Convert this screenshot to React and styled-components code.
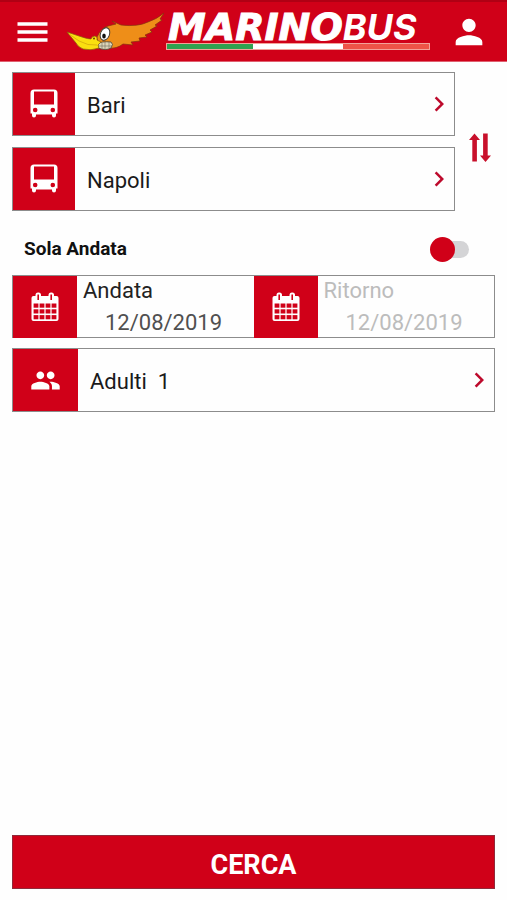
import React, { useState } from "react";
import styled, { createGlobalStyle } from "styled-components";
import { MdPerson, MdPeople, MdChevronRight } from "react-icons/md";

const RED = "#d00018";
const LINE = "#8c8c8c";

const GlobalStyle = createGlobalStyle`
  *, *::before, *::after { box-sizing: border-box; }
  body { margin: 0; background: #fefefe; }
  button, input { font: inherit; color: inherit; margin: 0; }
`;

const Page = styled.div`
  min-height: 100vh;
  display: flex;
  flex-direction: column;
  font-family: Roboto, "Liberation Sans", sans-serif;
  font-size: 22px;
  line-height: 32px;
  color: #1a1a1a;
`;

const Header = styled.header`
  display: flex;
  align-items: center;
  height: 62px;
  padding: 0 18px 0 16px;
  background: ${RED};
  border-top: 2px solid #b00014;
  border-bottom: 1px solid #e06070;
  color: #fff;
`;

const IconButton = styled.button`
  display: flex;
  align-items: center;
  justify-content: center;
  flex: none;
  padding: 0;
  border: 0;
  background: none;
  color: ${(p) => p.$color};
  cursor: pointer;
  svg { display: block; }
`;

const Brand = styled.a`
  flex: 1;
  display: flex;
  align-items: center;
  gap: 2px;
  margin-left: 18px;
  color: #fff;
  text-decoration: none;
  svg { flex: none; display: block; }
`;

const Wordmark = styled.span`
  display: flex;
  flex-direction: column;
  gap: 2px;
`;

const BrandText = styled.span`
  display: flex;
  align-items: baseline;
  height: 28px;
  padding-left: 2px;
  line-height: 28px;
  white-space: nowrap;
`;

const BrandHeavy = styled.span`
  font: italic 700 38px/28px "DejaVu Sans", sans-serif;
  -webkit-text-stroke: 1px #fff;
`;

const BrandLight = styled.span`
  font: italic 700 36px/28px Inter, sans-serif;
`;

const Flag = styled.span`
  width: 264px;
  height: 7px;
  border: 1px solid #f3a29a;
  background: linear-gradient(90deg, #2fa150 33%, #fff 33% 67%, #ee5347 67%);
`;

const Form = styled.form`
  flex: 1;
  display: flex;
  flex-direction: column;
  padding: 10px 12px 11px;
`;

const Route = styled.div`
  display: flex;
  align-items: center;
  gap: 14px;
  padding-right: 4px;
`;

const Stops = styled.div`
  flex: 1;
  display: flex;
  flex-direction: column;
  gap: 11px;
`;

const Picker = styled.button`
  display: flex;
  align-items: stretch;
  width: 100%;
  height: 64px;
  padding: 0;
  border: 1px solid ${LINE};
  background: #fefefe;
  text-align: left;
  cursor: pointer;
`;

const Tile = styled.span`
  flex: none;
  display: flex;
  align-items: center;
  justify-content: center;
  width: ${(p) => p.$width}px;
  background: ${RED};
  color: #fff;
`;

const PickerText = styled.span`
  flex: 1;
  align-self: center;
  padding: 3px 0 0 12px;
  white-space: pre;
`;

const Arrow = styled(MdChevronRight)`
  flex: none;
  align-self: center;
  color: #bd0a2c;
`;

const SwitchRow = styled.label`
  display: flex;
  align-items: center;
  justify-content: space-between;
  height: 64px;
  padding: 12px 26px 0 12px;
  font-size: 19px;
  line-height: 24px;
  font-weight: 700;
  color: #111;
`;

const Switch = styled.input`
  appearance: none;
  display: flex;
  align-items: center;
  width: 39px;
  height: 17px;
  background: #d4d4d6;
  border-radius: 9px;
  cursor: pointer;
  &::before {
    content: "";
    flex: none;
    width: 25px;
    height: 25px;
    border-radius: 50%;
    background: ${RED};
  }
  &:checked { justify-content: flex-end; }
`;

const Dates = styled.div`
  display: grid;
  grid-template-columns: 1fr 1fr;
  height: 63px;
  margin-bottom: 10px;
  border: 1px solid ${LINE};
`;

const DateField = styled.label`
  display: flex;
  min-width: 0;
  color: ${(p) => (p.$off ? "#bcbcbc" : "#222")};
`;

const DateBody = styled.span`
  flex: 1;
  min-width: 0;
  display: flex;
  flex-direction: column;
  padding-left: 6px;
  line-height: 30px;
`;

const DateInput = styled.input`
  width: 100%;
  height: 32px;
  padding: 0 0 0 22px;
  border: 0;
  background: none;
  color: ${(p) => (p.disabled ? "#bcbcbc" : "#505050")};
  outline: none;
`;

const Submit = styled.button`
  height: 54px;
  margin-top: auto;
  padding: 6px 0 0;
  border: 1px solid #8f2a3a;
  background: ${RED};
  color: #fff;
  font-size: 27px;
  font-weight: 700;
  cursor: pointer;
`;

const MenuIcon = () => (
  <svg width="32" height="20" viewBox="0 0 32 20" aria-hidden="true">
    <path d="M1.5 2H31.5M1.5 10H31.5M1.5 18H31.5" stroke="#fff" strokeWidth="3.4" />
  </svg>
);

const BusIcon = () => (
  <svg width="28" height="30" viewBox="0 0 28 30" aria-hidden="true">
    <path
      fill="currentColor"
      fillRule="evenodd"
      d="M4 0.500H24Q27.500 0.500 27.500 4V24.500H26V26.500Q26 28.500 24 28.500T22 26.500V25.500H6V26.500Q6 28.500 4 28.500T2 26.500V24.500H0.500V4Q0.500 0.500 4 0.500ZM4 2.500V15.500H24V2.500ZM5.200 18.700A2.300 2.300 0 1 0 5.200 23.300A2.300 2.300 0 1 0 5.200 18.700ZM22.800 18.700A2.300 2.300 0 1 0 22.800 23.300A2.300 2.300 0 1 0 22.800 18.700Z"
    />
  </svg>
);

const CalendarIcon = () => (
  <svg width="28" height="30" viewBox="0 0 28 30" aria-hidden="true">
    <rect x="0.500" y="4" width="27" height="25" rx="2" fill="#fff" />
    <rect x="4.500" y="0.500" width="5.500" height="9" rx="2.500" fill="#fff" />
    <rect x="17.500" y="0.500" width="5.500" height="9" rx="2.500" fill="#fff" />
    <path d="M7.200 2.500V8M20.200 2.500V8" stroke={RED} strokeWidth="1.600" />
    {[11.5, 17.3, 23.1].map((y) =>
      [2.6, 8.6, 14.6, 20.6].map((x) => (
        <rect key={`${x}-${y}`} x={x} y={y} width="4.800" height="4.200" fill={RED} />
      ))
    )}
  </svg>
);

const SwapIcon = () => (
  <svg width="22" height="42" viewBox="0 -12 22 42" aria-hidden="true">
    <path
      fill="#c8102b"
      d="M3.300 28.500V7H0L5.500 0.500L11 7H7.900V28.500ZM14.100 0.500V22.500H11L16.500 29L22 22.500H18.700V0.500Z"
    />
  </svg>
);

const BirdIcon = () => (
  <svg width="98" height="42" viewBox="66 11 98 42" aria-hidden="true">
    <path
      d="M97 37Q101 28 108 26L116 24L112 21L121 25Q138 27 148 22Q157 19 164 13L160 19L162 20L155 25L157 26L150 30L152 32L145 35L147 37L139 38L140 41L131 42L133 45L123 44Q117 49 108 48L98 45Z"
      fill="#ee8e18" stroke="#82320e" strokeWidth="0.700"
    />
    <ellipse cx="105" cy="34" rx="4.500" ry="6.500" fill="#fff" stroke="#333" strokeWidth="0.900" transform="rotate(22 105 34)" />
    <ellipse cx="104" cy="36" rx="1.800" ry="2.600" fill="#111" />
    <path d="M98 44Q101 41 111 42Q114 44 111 48Q106 51 98 48Z" fill="#dcd6b8" stroke="#4a3f2e" strokeWidth="0.800" />
    <path d="M99 46H112M102 43V49M105 42V50M109 42V49" stroke="#746c5a" strokeWidth="0.600" />
    <path
      d="M67 32L82 37Q88 39 91 39Q92 36 95 36Q98 37 97 40L101 42L98 45L99 48Q91 51 83 49Q78 47 76 43Z"
      fill="#fae00f" stroke="#875d0b" strokeWidth="0.700"
    />
    <path d="M69 34L79 41Q88 46 97 45" fill="none" stroke="#d6a90d" strokeWidth="0.800" />
    <circle cx="94" cy="38.500" r="0.900" fill="#533508" />
  </svg>
);

const Stop = ({ name }) => (
  <Picker type="button">
    <Tile $width={62}><BusIcon /></Tile>
    <PickerText>{name}</PickerText>
    <Arrow size={30} />
  </Picker>
);

const TravelDate = ({ label, off }) => (
  <DateField $off={off}>
    <Tile $width={64}><CalendarIcon /></Tile>
    <DateBody>
      {label}
      <DateInput type="text" defaultValue="12/08/2019" disabled={off} />
    </DateBody>
  </DateField>
);

export default function App() {
  const [stops, setStops] = useState(["Bari", "Napoli"]);
  const [roundTrip, setRoundTrip] = useState(false);
  return (
    <Page>
      <GlobalStyle />
      <Header>
        <IconButton type="button" aria-label="Menu" $color="#fff"><MenuIcon /></IconButton>
        <Brand href="#" aria-label="MarinoBus">
          <BirdIcon />
          <Wordmark>
            <BrandText>
              <BrandHeavy>MARINO</BrandHeavy>
              <BrandLight>BUS</BrandLight>
            </BrandText>
            <Flag />
          </Wordmark>
        </Brand>
        <IconButton type="button" aria-label="Profilo" $color="#fff"><MdPerson size={40} /></IconButton>
      </Header>
      <Form onSubmit={(e) => e.preventDefault()}>
        <Route>
          <Stops>
            {stops.map((s) => <Stop key={s} name={s} />)}
          </Stops>
          <IconButton
            type="button"
            aria-label="Inverti"
            $color={RED}
            onClick={() => setStops([stops[1], stops[0]])}
          >
            <SwapIcon />
          </IconButton>
        </Route>
        <SwitchRow>
          Sola Andata
          <Switch type="checkbox" checked={roundTrip} onChange={(e) => setRoundTrip(e.target.checked)} />
        </SwitchRow>
        <Dates>
          <TravelDate label="Andata" off={false} />
          <TravelDate label="Ritorno" off={!roundTrip} />
        </Dates>
        <Picker type="button">
          <Tile $width={65}><MdPeople size={31} /></Tile>
          <PickerText>{"Adulti  1"}</PickerText>
          <Arrow size={30} />
        </Picker>
        <Submit type="submit">CERCA</Submit>
      </Form>
    </Page>
  );
}
